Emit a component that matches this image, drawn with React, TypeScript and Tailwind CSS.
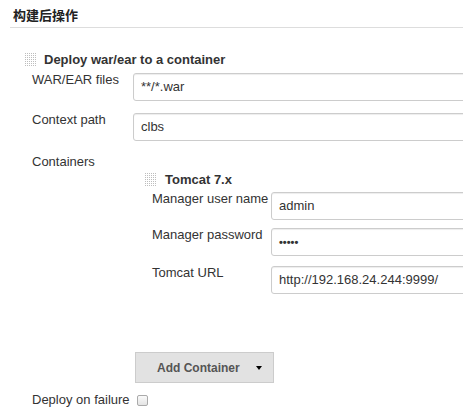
import React from 'react';

// dotted drag handle shown left of each repeatable block
const Grip: React.FC = () => {
  const dots: React.ReactNode[] = [];
  for (let y = 0; y < 14; y += 2) {
    for (let x = 0; x < 12; x += 2) {
      dots.push(<rect key={`${x}-${y}`} x={x} y={y} width="1" height="1" fill="#bdbdbd" />);
    }
  }
  return (
    <svg width="12" height="14" viewBox="0 0 12 14" className="shrink-0">
      {dots}
    </svg>
  );
};

const TextBox: React.FC<{ value: string; className?: string }> = ({ value, className = '' }) => (
  <div
    className={`h-[28px] w-[400px] shrink-0 rounded-[3px] border border-[#ccc] bg-white pl-[7px] leading-[26px] text-[#333] shadow-[inset_0_1px_1px_rgba(0,0,0,0.075)] ${className}`}
  >
    {value}
  </div>
);

export default function App() {
  return (
    <div className="h-[410px] w-[463px] overflow-hidden bg-white font-['Liberation_Sans',Arial,'Noto_Sans_CJK_SC',sans-serif] text-[13px] leading-[16px] text-[#333]">
      {/* Section header */}
      <div className="ml-[10px] h-[28px] border-b border-[#ddd] pl-[3px] pt-[8px] font-bold text-[#222]">构建后操作</div>

      {/* Deploy block */}
      <div className="ml-[25px] mt-[24px] flex items-center gap-[7px] font-bold">
        <Grip />
        <span>Deploy war/ear to a container</span>
      </div>

      <div className="ml-[32px] mt-[4px] flex items-start">
        <div className="w-[101px] shrink-0">WAR/EAR files</div>
        <TextBox value="**/*.war" className="mt-[1px]" />
      </div>

      <div className="ml-[32px] mt-[11px] flex items-start">
        <div className="w-[101px] shrink-0">Context path</div>
        <TextBox value="clbs" className="mt-[1px]" />
      </div>

      <div className="ml-[32px] mt-[13px]">Containers</div>

      {/* Tomcat container */}
      <div className="ml-[145px] mt-[2px] flex items-center gap-[8px] font-bold">
        <Grip />
        <span>Tomcat 7.x</span>
      </div>

      <div className="ml-[152px] mt-[3px] flex items-start">
        <div className="w-[119px] shrink-0">Manager user name</div>
        <TextBox value="admin" className="mt-[1px]" />
      </div>

      <div className="ml-[152px] mt-[7px] flex items-start">
        <div className="w-[119px] shrink-0">Manager password</div>
        <TextBox value="•••••" className="mt-[1px] text-[11px] font-bold" />
      </div>

      <div className="ml-[152px] mt-[9px] flex items-start">
        <div className="w-[119px] shrink-0">Tomcat URL</div>
        <TextBox value="http://192.168.24.244:9999/" className="mt-[1px]" />
      </div>

      {/* Add Container */}
      <div className="ml-[135px] mt-[58px] flex h-[31px] w-[139px] items-center border border-[#ccc] bg-[#e2e2e2] pl-[21px] text-[12px] font-bold text-[#555]">
        <span>Add Container</span>
        <span className="ml-auto mr-[11px] h-0 w-0 border-x-[3px] border-t-[4px] border-x-transparent border-t-black" />
      </div>

      <div className="ml-[32px] mt-[9px] flex items-start">
        <div className="w-[105px] shrink-0">Deploy on failure</div>
        <div className="mt-[3px] h-[11px] w-[11px] rounded-[2px] border border-[#aaa] bg-gradient-to-b from-[#fafafa] to-[#e4e4e4]" />
      </div>
    </div>
  );
}
